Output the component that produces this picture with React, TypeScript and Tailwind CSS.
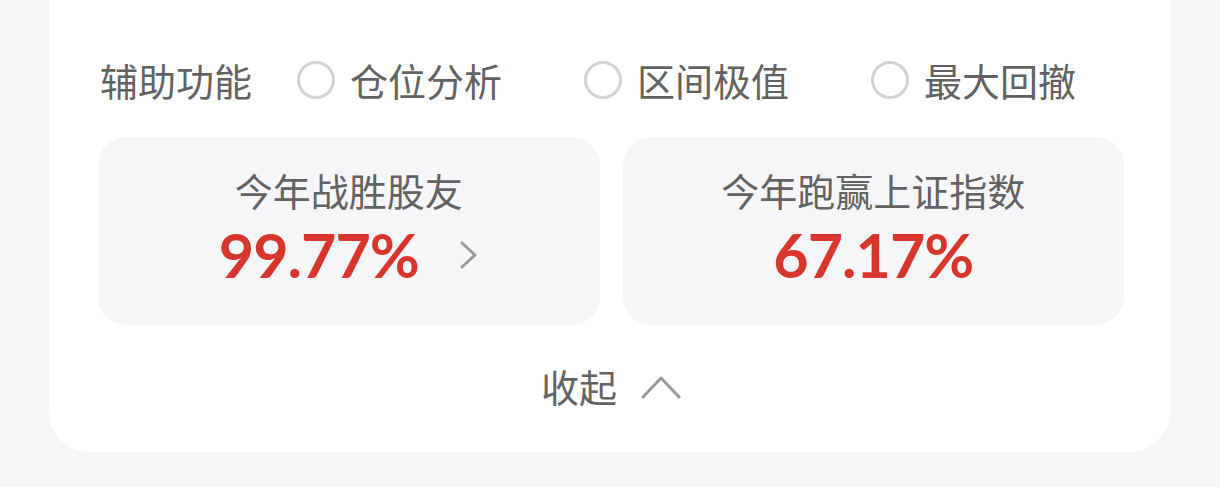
const options = ['仓位分析', '区间极值', '最大回撤'];

const cjk = { fontFamily: '"Noto Sans CJK SC", "Noto Sans", sans-serif' };
const num = { fontFamily: 'Lato, "Noto Sans", sans-serif' };

const Radio = ({ label }: { label: string }) => (
    <div className="flex w-[287px] items-center gap-[15px]">
        <span className="h-[38px] w-[38px] shrink-0 rounded-full border-[3px] border-[#d2d2d2]" />
        <span className="text-[38px] leading-[44px] text-[#626262]">{label}</span>
    </div>
);

const ChevronRight = () => (
    <svg width="20" height="28" viewBox="0 0 20 28" fill="none">
        <path d="M3 2 L16 14 L3 26" stroke="#9a9a9a" strokeWidth="3" strokeLinecap="round" strokeLinejoin="round" />
    </svg>
);

const ChevronUp = () => (
    <svg width="40" height="28" viewBox="0 0 40 28" fill="none">
        <path d="M2 25 L20 6 L38 25" stroke="#9a9a9a" strokeWidth="3" strokeLinecap="round" strokeLinejoin="round" />
    </svg>
);

const StatCard = ({ title, value, arrow }: { title: string; value: string; arrow?: boolean }) => (
    <div className="flex h-[188px] flex-1 flex-col items-center rounded-[28px] bg-[#f6f6f8] pt-[31px]">
        <div className="text-[38px] leading-[44px] text-[#626262]">{title}</div>
        <div className="mt-[11px] flex items-center">
            <span className="text-[61px] leading-[64px] font-bold tracking-[-1px] text-[#d8362d]" style={num}>
                {value}
            </span>
            {arrow && (
                <span className="ml-[40px] flex">
                    <ChevronRight />
                </span>
            )}
        </div>
    </div>
);

export default function App() {
    return (
        <div className="h-[487px] w-[1220px] overflow-hidden bg-[#f5f6f8]" style={cjk}>
            <div className="ml-[49px] w-[1121px] rounded-b-[40px] bg-white pr-[46px] pb-[44px] pl-[49px]">
                <div className="flex h-[102px] items-end">
                    <div className="flex h-[44px] items-center">
                        <span className="ml-[2px] w-[197px] text-[38px] leading-[44px] text-[#626262]">辅助功能</span>
                        {options.map((o) => (
                            <Radio key={o} label={o} />
                        ))}
                    </div>
                </div>
                <div className="mt-[35px] flex gap-[23px]">
                    <StatCard title="今年战胜股友" value="99.77%" arrow />
                    <StatCard title="今年跑赢上证指数" value="67.17%" />
                </div>
                <div className="mt-[39px] flex items-center justify-center gap-[24px]">
                    <span className="text-[38px] leading-[44px] text-[#626262]">收起</span>
                    <ChevronUp />
                </div>
            </div>
        </div>
    );
}
